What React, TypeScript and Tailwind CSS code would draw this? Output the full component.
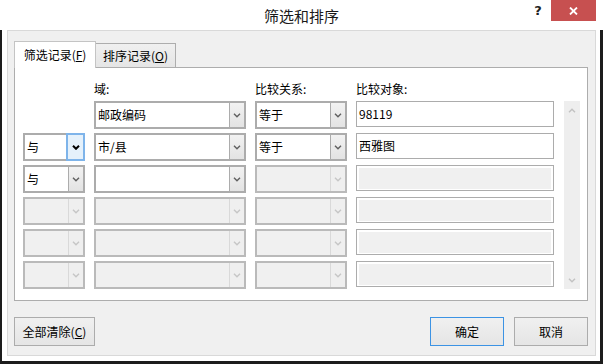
import React from 'react';

type Row = {
  conj?: string | null;
  conjState: 'none' | 'on' | 'focus' | 'off';
  field: string;
  fieldOn: boolean;
  op: string;
  opOn: boolean;
  val: string;
  valOn: boolean;
};

const rows: Row[] = [
  { conj: null, conjState: 'none', field: '邮政编码', fieldOn: true, op: '等于', opOn: true, val: '98119', valOn: true },
  { conj: '与', conjState: 'focus', field: '市/县', fieldOn: true, op: '等于', opOn: true, val: '西雅图', valOn: true },
  { conj: '与', conjState: 'on', field: '', fieldOn: true, op: '', opOn: false, val: '', valOn: false },
  { conj: '', conjState: 'off', field: '', fieldOn: false, op: '', opOn: false, val: '', valOn: false },
  { conj: '', conjState: 'off', field: '', fieldOn: false, op: '', opOn: false, val: '', valOn: false },
  { conj: '', conjState: 'off', field: '', fieldOn: false, op: '', opOn: false, val: '', valOn: false },
];

function Chevron({ color, bold, up }: { color: string; bold?: boolean; up?: boolean }) {
  return (
    <svg width="8" height="5" viewBox="0 0 8 5">
      <path
        d={up ? 'M1 4.2L4 1.2L7 4.2' : 'M1 0.8L4 3.8L7 0.8'}
        fill="none"
        stroke={color}
        strokeWidth={bold ? 2 : 1.4}
      />
    </svg>
  );
}

function Combo({
  value,
  width,
  disabled,
  focused,
}: {
  value?: string;
  width: string;
  disabled?: boolean;
  focused?: boolean;
}) {
  return (
    <div
      className={`flex h-[28px] shrink-0 border-2 ${width} ${
        disabled ? 'border-[#bababa] bg-[#f0f0f0]' : 'border-[#acacac] bg-white'
      }`}
    >
      <div className="flex flex-1 items-center pl-[2px] text-[12px] leading-none text-black">{value}</div>
      {focused ? (
        <div className="-my-[2px] -mr-[2px] flex w-[19px] items-center justify-center border-2 border-[#7eb4ea] bg-[#e5f1fb]">
          <Chevron color="#000" bold />
        </div>
      ) : (
        <div
          className={`flex w-[15px] items-center justify-center border-l ${
            disabled
              ? 'border-[#d9d9d9] bg-[#efefef]'
              : 'border-[#acacac] bg-linear-to-b from-[#f2f2f2] to-[#e3e3e3]'
          }`}
        >
          <Chevron color={disabled ? '#c6c6c6' : '#5f5f5f'} />
        </div>
      )}
    </div>
  );
}

function TextBox({ value, disabled }: { value: string; disabled?: boolean }) {
  if (disabled) {
    return (
      <div className="h-[26px] w-[198px] shrink-0 border border-[#acacac] bg-white p-[2px] pb-[1px]">
        <div className="h-full w-full bg-[#f0f0f0]" />
      </div>
    );
  }
  return (
    <div className="flex h-[26px] w-[198px] shrink-0 items-center border border-[#acacac] bg-white pl-[2px] text-[12px] leading-none text-black">
      {value}
    </div>
  );
}

function Button({ children, primary, width }: { children: React.ReactNode; primary?: boolean; width: string }) {
  return (
    <button
      className={`flex h-[29px] items-center justify-center border bg-linear-to-b from-[#f0f0f0] to-[#e5e5e5] text-[12px] leading-none text-black ${width} ${
        primary ? 'border-[#3c93e4]' : 'border-[#acacac]'
      }`}
    >
      {children}
    </button>
  );
}

export default function App() {
  return (
    <div className="flex h-[364px] w-[603px] flex-col bg-white font-['Noto_Sans_CJK_SC',sans-serif] text-black">
      {/* title bar */}
      <div className="grid h-[30px] shrink-0 grid-cols-[1fr_auto_1fr]">
        <div />
        <div className="flex items-center pt-[1px] text-[15px] leading-none text-[#1a1a1a]">筛选和排序</div>
        <div className="flex items-start justify-end pr-[7px]">
          <span className="flex h-[21px] w-[26px] items-center justify-center font-['DejaVu_Sans',sans-serif] text-[13px] font-bold leading-none text-[#222]">
            ?
          </span>
          <div className="flex h-[21px] w-[45px] items-center justify-center bg-[#c75050]">
            <svg width="9" height="8" viewBox="0 0 9 8">
              <path d="M1 0.5L8 7.5M8 0.5L1 7.5" stroke="#fff" strokeWidth="1.8" />
            </svg>
          </div>
        </div>
      </div>

      {/* window body */}
      <div className="flex flex-1">
        <div className="w-[2px] bg-[#1c1c1c]" />
        <div className="flex flex-1 flex-col pl-[5px] pr-[4px] pb-[5px]">
          <div className="flex flex-1 flex-col border border-[#d9d9d9] bg-[#f0f0f0] pl-[6px] pr-[7px] pt-[10px] pb-[9px]">
            {/* tabs */}
            <div className="flex h-[26px] items-end">
              <div className="relative z-10 -mb-px flex h-[27px] w-[82px] items-center justify-center border border-b-0 border-[#c4c4c4] bg-white text-[12px] leading-none">
                筛选记录(<span className="underline">F</span>)
              </div>
              <div className="flex h-[24px] w-[80px] items-center justify-center border border-b-0 border-l-0 border-[#adadad] bg-linear-to-b from-[#f0f0f0] to-[#e5e5e5] text-[12px] leading-none">
                排序记录(<span className="underline">O</span>)
              </div>
            </div>

            {/* panel */}
            <div className="flex h-[234px] border border-[#adadad] bg-white pl-[8px] pt-[13px]">
              <div className="flex flex-col">
                <div className="mb-[4px] flex h-[16px] items-center text-[12px] leading-none">
                  <div className="w-[71px] shrink-0" />
                  <div className="w-[161px] shrink-0">域:</div>
                  <div className="w-[101px] shrink-0">比较关系:</div>
                  <div className="w-[198px] shrink-0">比较对象:</div>
                </div>
                <div className="flex flex-col gap-[4px]">
                  {rows.map((r, i) => (
                    <div key={i} className="flex items-start gap-[9px]">
                      {r.conjState === 'none' ? (
                        <div className="w-[62px] shrink-0" />
                      ) : (
                        <Combo
                          value={r.conj ?? ''}
                          width="w-[62px]"
                          disabled={r.conjState === 'off'}
                          focused={r.conjState === 'focus'}
                        />
                      )}
                      <Combo value={r.field} width="w-[152px]" disabled={!r.fieldOn} />
                      <Combo value={r.op} width="w-[92px]" disabled={!r.opOn} />
                      <TextBox value={r.val} disabled={!r.valOn} />
                    </div>
                  ))}
                </div>
              </div>
              {/* scrollbar */}
              <div className="ml-[10px] mt-[20px] flex h-[188px] w-[16px] flex-col items-center justify-between bg-[#eeeeee] pt-[7px] pb-[6px]">
                <Chevron color="#c2c2c2" up />
                <Chevron color="#c2c2c2" />
              </div>
            </div>

            {/* buttons */}
            <div className="mt-[16px] flex items-center">
              <Button width="w-[81px]">
                全部清除(<span className="underline">C</span>)
              </Button>
              <div className="flex-1" />
              <div className="flex gap-[10px]">
                <Button width="w-[74px]" primary>
                  确定
                </Button>
                <Button width="w-[74px]">取消</Button>
              </div>
            </div>
          </div>
        </div>
        <div className="w-[3px] bg-[#1c1c1c]" />
      </div>
      <div className="h-[3px] shrink-0 bg-[#1c1c1c]" />
    </div>
  );
}
